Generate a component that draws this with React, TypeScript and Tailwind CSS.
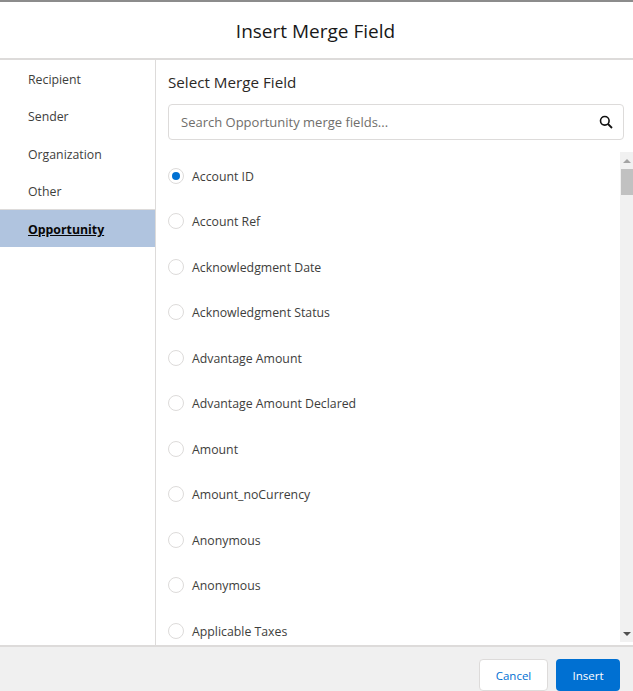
import React from 'react';

const navItems = ['Recipient', 'Sender', 'Organization', 'Other'];

const fields = [
  'Account ID',
  'Account Ref',
  'Acknowledgment Date',
  'Acknowledgment Status',
  'Advantage Amount',
  'Advantage Amount Declared',
  'Amount',
  'Amount_noCurrency',
  'Anonymous',
  'Anonymous',
  'Applicable Taxes',
];

const SearchIcon = () => (
  <svg width="14" height="14" viewBox="0 0 14 14" fill="none" stroke="#111" className="block">
    <circle cx="5.8" cy="5.8" r="4.3" strokeWidth="1.6" />
    <path d="M9 9l4 4" strokeWidth="1.8" />
  </svg>
);

const App: React.FC = () => {
  return (
    <div className="h-[691px] w-[633px] flex flex-col overflow-hidden bg-white font-['Open_Sans','Noto_Sans',sans-serif] text-[#3e3e3c]">
      <div className="h-[2px] bg-[#8c8c8c]" />

      <header className="h-[58px] shrink-0 flex items-center justify-center border-b-2 border-[#dddbda]">
        <h1 className="text-[19px] text-[#181818] leading-none pt-[3px] pr-[2px]">Insert Merge Field</h1>
      </header>

      <div className="flex flex-1 min-h-0">
        {/* Left nav */}
        <nav className="w-[156px] shrink-0 border-r border-[#dddbda] text-[12.3px]">
          {navItems.map((item) => (
            <div key={item} className="h-[37.25px] pl-[28px] pt-[3.5px] flex items-center">
              {item}
            </div>
          ))}
          <div className="h-[38px] pl-[28px] pt-[4px] flex items-center bg-[#b0c4df] border-t border-[#dddbda] font-bold text-[#080707] underline">
            Opportunity
          </div>
        </nav>

        {/* Field list */}
        <main className="flex-1 min-w-0 flex flex-col">
          <div className="pl-[12px] pr-[9px]">
            <h2 className="text-[15.2px] leading-[20px] mt-[12px] text-[#2b2826]">Select Merge Field</h2>
            <div className="mt-[12px] h-[36px] flex items-center justify-between border border-[#dddbda] rounded pl-[12px] pr-[10px]">
              <span className="text-[13px] text-[#706e6b] pt-[1px]">Search Opportunity merge fields...</span>
              <SearchIcon />
            </div>
          </div>

          <div className="flex flex-1 min-h-0 mt-[12px] mb-[3px]">
            <ul className="flex-1 overflow-hidden pl-[12px] pt-[1px]">
              {fields.map((field, i) => (
                <li key={i + field} className="h-[45.5px] flex items-center gap-[8px] text-[12.3px]">
                  <span className="w-4 h-4 rounded-full border border-[#dddbda] bg-white flex items-center justify-center">
                    {i === 0 && <span className="w-2 h-2 rounded-full bg-[#0070d2]" />}
                  </span>
                  <span className="pt-[2px]">{field}</span>
                </li>
              ))}
            </ul>

            {/* Scrollbar */}
            <div className="w-[13px] shrink-0 bg-[#f1f1f1] flex flex-col items-center">
              <div className="h-[17px] shrink-0 flex items-center justify-center">
                <span className="border-x-[4px] border-x-transparent border-b-[4px] border-b-[#a3a3a3]" />
              </div>
              <div className="h-[26px] w-[12px] ml-[1px] bg-[#c1c1c1]" />
              <div className="flex-1" />
              <div className="h-[17px] shrink-0 flex items-center justify-center">
                <span className="border-x-[4px] border-x-transparent border-t-[4px] border-t-[#505050]" />
              </div>
            </div>
          </div>
        </main>
      </div>

      <footer className="h-[46px] shrink-0 bg-[#f0f0f0] border-t-2 border-[#dddbda] flex items-start justify-end gap-[8px] pt-[12px] pr-[13px] text-[11.5px]">
        <button className="w-[69px] h-[32px] bg-white border border-[#dddbda] rounded text-[#0070d2] pt-[1px]">Cancel</button>
        <button className="w-[64px] h-[32px] bg-[#0070d2] rounded text-white pt-[1px]">Insert</button>
      </footer>
    </div>
  );
};

export default App;
